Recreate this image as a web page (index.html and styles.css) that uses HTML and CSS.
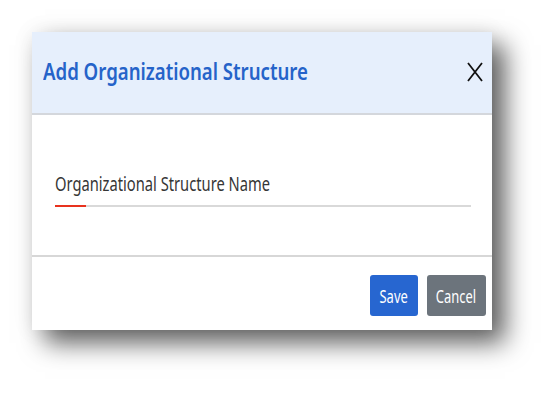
FILE: index.html
```html
<!DOCTYPE html>
<html lang="en">
<head>
<meta charset="utf-8">
<title>Add Organizational Structure</title>
<link rel="stylesheet" href="styles.css">
</head>
<body>
<div class="stage">
  <div class="dialog">
    <div class="dialog-header">
      <h2 class="dialog-title"><span class="squish">Add Organizational Structure</span></h2>
      <button class="close-btn" aria-label="Close">
        <svg width="16" height="20" viewBox="0 0 16 20"><path d="M1 1 L15 19 M15 1 L1 19" stroke="#111" stroke-width="1.8" fill="none"/></svg>
      </button>
    </div>
    <div class="dialog-body">
      <label class="field">
        <span class="field-label"><span class="squish squish-label">Organizational Structure Name</span></span>
        <span class="field-line"><span class="field-accent"></span></span>
      </label>
    </div>
    <div class="dialog-footer">
      <button class="btn btn-primary"><span class="squish">Save</span></button>
      <button class="btn btn-secondary"><span class="squish">Cancel</span></button>
    </div>
  </div>
</div>
</body>
</html>
```

FILE: styles.css
```css
html, body {
  margin: 0;
  padding: 0;
  background: #ffffff;
}
body {
  font-family: "Noto Sans", "Open Sans", sans-serif;
  width: 554px;
  height: 394px;
  overflow: hidden;
}
.stage {
  padding: 32px 0 0 32px;
}
.dialog {
  width: 460px;
  height: 298px;
  background: #ffffff;
  display: flex;
  flex-direction: column;
  box-shadow: 13px 13px 24px rgba(0, 0, 0, 0.62), 0 0 22px rgba(0, 0, 0, 0.07);
}
.squish {
  display: inline-block;
  transform: scaleX(0.775);
  transform-origin: left center;
  white-space: nowrap;
}
.squish-label {
  transform: scaleX(0.735);
}
.dialog-header {
  height: 81px;
  background: #e6effc;
  border-bottom: 2px solid #d4d7dc;
  display: flex;
  align-items: center;
  justify-content: space-between;
  padding: 0 9px 0 11px;
}
.dialog-title {
  margin: 0;
  font-size: 24px;
  font-weight: 600;
  color: #2563c9;
  width: 320px;
  line-height: 1;
  padding-bottom: 4px;
}
.close-btn {
  border: 0;
  background: none;
  padding: 0;
  width: 16px;
  height: 20px;
  display: flex;
  margin-bottom: 1px;
}
.dialog-body {
  height: 142px;
  padding: 0 21px 0 23px;
  border-bottom: 2px solid #d7d7d7;
  box-sizing: border-box;
}
.field {
  display: flex;
  flex-direction: column;
  padding-top: 56px;
}
.field-label {
  font-size: 20px;
  color: #363636;
  line-height: 26px;
  height: 26px;
  width: 300px;
}
.field-line {
  display: block;
  margin-top: 8px;
  height: 2px;
  background: #d9d9d9;
}
.field-accent {
  display: block;
  width: 31px;
  height: 2px;
  background: #e8321e;
}
.dialog-footer {
  flex: 1;
  display: flex;
  justify-content: flex-end;
  align-items: flex-start;
  gap: 9px;
  padding: 18px 6px 0 0;
}
.btn {
  border: 0;
  border-radius: 3px;
  height: 41px;
  color: #ffffff;
  font-family: "Noto Sans", "Open Sans", sans-serif;
  font-size: 18px;
  padding: 0;
  display: flex;
  align-items: center;
  justify-content: center;
}
.btn .squish {
  transform: scaleX(0.72);
  transform-origin: center center;
}
.btn-primary {
  width: 48px;
  background: #2766d0;
}
.btn-secondary {
  width: 59px;
  background: #6c747c;
}
```
